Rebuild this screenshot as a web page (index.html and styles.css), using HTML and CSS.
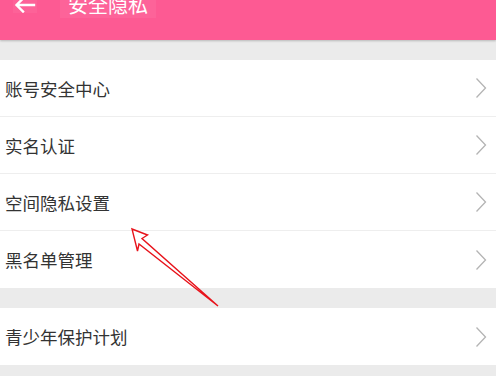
FILE: index.html
```html
<!DOCTYPE html>
<html lang="zh-CN">
<head>
<meta charset="utf-8">
<link rel="stylesheet" href="styles.css">
</head>
<body>
<div class="page">
  <header class="topbar">
    <div class="topbar-row">
      <span class="back">
        <svg width="22" height="16" viewBox="0 0 22 16"><path d="M20 8H3M9 1.5L2.5 8L9 14.5" fill="none" stroke="#fff" stroke-width="2.4" stroke-linecap="square"/></svg>
      </span>
      <span class="title">安全隐私</span>
    </div>
  </header>
  <div class="group first">
    <div class="row"><span class="label">账号安全中心</span><span class="chev"><svg width="12" height="22" viewBox="0 0 12 22"><path d="M1.5 1.5L10.5 11L1.5 20.5" fill="none" stroke="#b4b4b4" stroke-width="1.3"/></svg></span></div>
    <div class="row"><span class="label">实名认证</span><span class="chev"><svg width="12" height="22" viewBox="0 0 12 22"><path d="M1.5 1.5L10.5 11L1.5 20.5" fill="none" stroke="#b4b4b4" stroke-width="1.3"/></svg></span></div>
    <div class="row"><span class="label">空间隐私设置</span><span class="chev"><svg width="12" height="22" viewBox="0 0 12 22"><path d="M1.5 1.5L10.5 11L1.5 20.5" fill="none" stroke="#b4b4b4" stroke-width="1.3"/></svg></span></div>
    <div class="row"><span class="label">黑名单管理</span><span class="chev"><svg width="12" height="22" viewBox="0 0 12 22"><path d="M1.5 1.5L10.5 11L1.5 20.5" fill="none" stroke="#b4b4b4" stroke-width="1.3"/></svg></span></div>
  </div>
  <div class="group">
    <div class="row"><span class="label">青少年保护计划</span><span class="chev"><svg width="12" height="22" viewBox="0 0 12 22"><path d="M1.5 1.5L10.5 11L1.5 20.5" fill="none" stroke="#b4b4b4" stroke-width="1.3"/></svg></span></div>
  </div>
  <svg class="annot" width="496" height="376" viewBox="0 0 496 376">
    <polygon points="132,229 147.5,235 142,238.5 218,306 139,244 137.5,251" fill="none" stroke="#e8131b" stroke-width="1.4" stroke-linejoin="miter"/>
  </svg>
</div>
</body>
</html>
```

FILE: styles.css
```css
* { box-sizing: border-box; }
html, body { margin: 0; padding: 0; }
body {
  background: #ebebeb;
  font-family: "Noto Sans CJK SC", "Noto Sans", sans-serif;
  width: 496px;
  height: 376px;
  overflow: hidden;
}
.page { position: relative; width: 496px; height: 376px; }
.topbar {
  height: 40px;
  background: #fd5a93;
  box-shadow: 0 1px 2px rgba(0, 0, 0, 0.22);
  position: relative;
  z-index: 1;
}
.topbar-row {
  height: 10px;
  display: flex;
  align-items: center;
}
.back {
  margin-left: 13px;
  width: 24px;
  display: flex;
  align-items: center;
  justify-content: center;
  background: rgba(255, 255, 255, 0.05);
  height: 16px;
}
.title {
  margin-left: 23px;
  padding: 0 8px;
  color: #fff;
  font-size: 20px;
  line-height: 26px;
  background: rgba(255, 255, 255, 0.06);
}
.group {
  background: #fff;
  margin-top: 20px;
}
.row {
  height: 57px;
  display: flex;
  align-items: center;
  justify-content: space-between;
  padding: 0 9px 0 5px;
  border-bottom: 1px solid #eeeeee;
}
.row:last-child { border-bottom: none; }
.label {
  font-size: 17.5px;
  color: #333;
}
.chev { display: flex; align-items: center; }
.annot {
  position: absolute;
  left: 0;
  top: 0;
  pointer-events: none;
  z-index: 2;
}
```
